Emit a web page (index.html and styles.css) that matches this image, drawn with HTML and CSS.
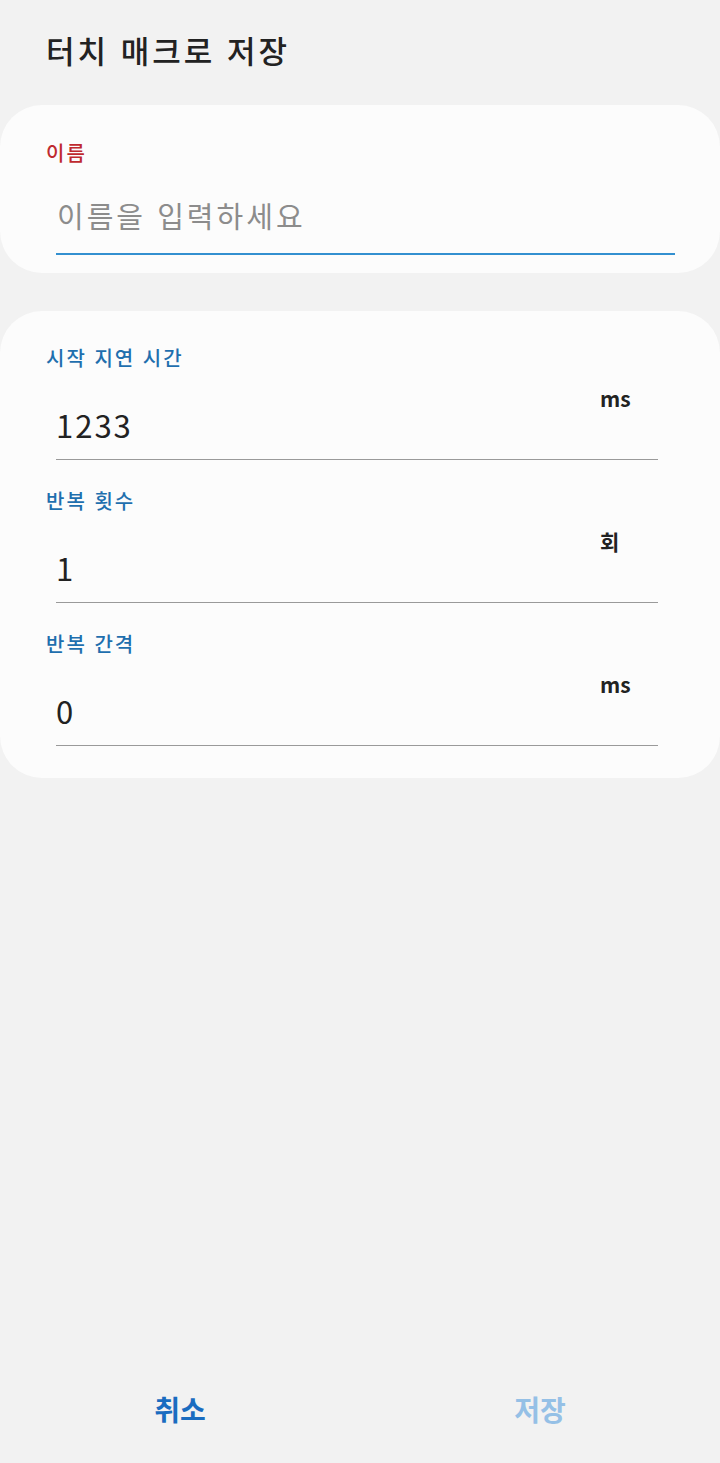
FILE: index.html
```html
<!DOCTYPE html>
<html lang="ko">
<head>
<meta charset="utf-8">
<title>터치 매크로 저장</title>
<link rel="stylesheet" href="styles.css">
</head>
<body>
<div class="page">
  <header class="header">
    <h1 class="title">터치 매크로 저장</h1>
  </header>

  <section class="card card-name">
    <div class="label label-red">이름</div>
    <div class="name-field">
      <span class="placeholder">이름을 입력하세요</span>
    </div>
  </section>

  <section class="card card-settings">
    <div class="row">
      <div class="label label-blue">시작 지연 시간</div>
      <div class="field">
        <span class="value">1233</span>
        <span class="unit">ms</span>
      </div>
    </div>
    <div class="row">
      <div class="label label-blue">반복 횟수</div>
      <div class="field">
        <span class="value">1</span>
        <span class="unit">회</span>
      </div>
    </div>
    <div class="row">
      <div class="label label-blue">반복 간격</div>
      <div class="field">
        <span class="value">0</span>
        <span class="unit">ms</span>
      </div>
    </div>
  </section>

  <footer class="actions">
    <button class="action action-cancel">취소</button>
    <button class="action action-save">저장</button>
  </footer>
</div>
</body>
</html>
```

FILE: styles.css
```css
* { box-sizing: border-box; }

html, body {
  margin: 0;
  padding: 0;
  background: #f2f2f2;
}

body {
  font-family: "Noto Sans CJK KR", "Noto Sans", sans-serif;
  color: #222;
}

.page {
  min-height: 1463px;
  display: flex;
  flex-direction: column;
}

.header {
  padding: 30px 0 0 46px;
  height: 105px;
}

.title {
  margin: 0;
  font-size: 31px;
  font-weight: 500;
  line-height: 40px;
  letter-spacing: 3px;
  color: #222;
}

.card {
  background: #fcfcfc;
  border-radius: 42px;
}

.card-name {
  padding: 36px 45px 18px 46px;
}

.label {
  font-size: 20px;
  line-height: 24px;
  font-weight: 500;
  letter-spacing: 2px;
}

.label-red { color: #bf2a2f; }
.label-blue { color: #1f6fae; }

.name-field {
  margin: 20px 0 0 10px;
  height: 70px;
  padding-bottom: 8px;
  border-bottom: 2px solid #3390d0;
}

.placeholder {
  display: block;
  font-size: 29px;
  line-height: 60px;
  letter-spacing: 3px;
  color: #8c8c8c;
  padding-left: 1px;
}

.card-settings {
  margin-top: 38px;
  padding: 35px 62px 32px 46px;
  display: flex;
  flex-direction: column;
  gap: 29px;
}

.field {
  margin: 0 0 0 10px;
  height: 90px;
  border-bottom: 1px solid #9a9a9a;
  display: flex;
  justify-content: space-between;
}

.value {
  align-self: flex-end;
  margin-bottom: 14px;
  font-size: 31px;
  line-height: 40px;
  letter-spacing: 2px;
  color: #222;
}

.unit {
  align-self: flex-start;
  width: 34px;
  margin-top: 13px;
  margin-right: 24px;
  font-size: 21px;
  line-height: 30px;
  font-weight: 700;
  color: #222;
}

.actions {
  margin-top: auto;
  display: flex;
  height: 87px;
  padding-bottom: 20px;
}

.action {
  flex: 1;
  border: none;
  background: transparent;
  font-family: inherit;
  font-size: 28px;
  font-weight: 700;
  line-height: 67px;
  padding: 0;
}

.action-cancel { color: #1a6cc0; }
.action-save { color: #95c0e6; }
```
